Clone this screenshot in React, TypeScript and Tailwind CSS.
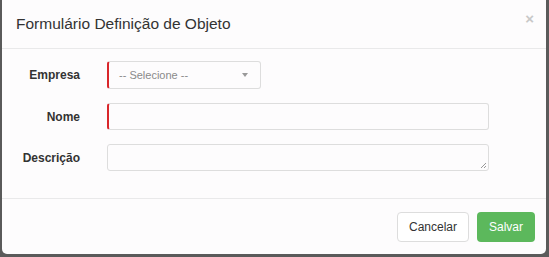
const font = { fontFamily: '"Liberation Sans", Arial, sans-serif' }

export default function App() {
  return (
    <div className="flex h-[257px] w-[549px] bg-[#5a5a5a] pl-[2px] pr-[3px] pb-[3px]" style={font}>
      <div className="flex flex-1 flex-col rounded-b-[5px] bg-[#fdfcfd]">
        <div className="flex h-[49px] items-center justify-between border-b border-[#e9e9ea] pl-[14px] pr-[12px]">
          <h4 className="text-[15.5px] text-[#333]">Formulário Definição de Objeto</h4>
          <span className="-mt-[11px] text-[15px] font-bold leading-none text-[#c8c8c8]">×</span>
        </div>

        <div className="flex flex-col gap-[14px] pt-[12px] pb-[27px]">
          <div className="flex items-center">
            <label className="w-[78px] text-right text-[12px] font-bold text-[#333]">Empresa</label>
            <div className="ml-[27px] flex h-[28px] w-[154px] items-center justify-between rounded-[3px] border border-[#ddd] border-l-2 border-l-[#d9262b] pl-[10px] pr-[12px]">
              <span className="text-[11px] text-[#8a8a8a]">-- Selecione --</span>
              <span className="h-0 w-0 border-x-[3.5px] border-t-[4px] border-x-transparent border-t-[#999]" />
            </div>
          </div>

          <div className="flex items-center">
            <label className="w-[78px] text-right text-[12px] font-bold text-[#333]">Nome</label>
            <div className="ml-[27px] h-[27px] w-[382px] rounded-[3px] border border-[#ddd] border-l-2 border-l-[#d9262b]" />
          </div>

          <div className="flex items-center">
            <label className="w-[78px] text-right text-[12px] font-bold text-[#333]">Descrição</label>
            <div className="relative ml-[27px] h-[27px] w-[382px] rounded-[3px] border border-[#ddd]">
              <svg className="absolute right-[1px] bottom-[1px]" width="7" height="7" viewBox="0 0 7 7">
                <path d="M6 1L1 6M6 4L4 6" stroke="#999" strokeWidth="1" />
              </svg>
            </div>
          </div>
        </div>

        <div className="flex flex-1 items-start justify-end gap-[8px] border-t border-[#e9e9ea] pt-[13px] pr-[11px]">
          <button className="h-[30px] w-[72px] rounded-[4px] border border-[#ddd] bg-white text-[12px] text-[#333]">
            Cancelar
          </button>
          <button className="h-[30px] w-[58px] rounded-[4px] bg-[#5cb85c] text-[12px] text-white">
            Salvar
          </button>
        </div>
      </div>
    </div>
  )
}
